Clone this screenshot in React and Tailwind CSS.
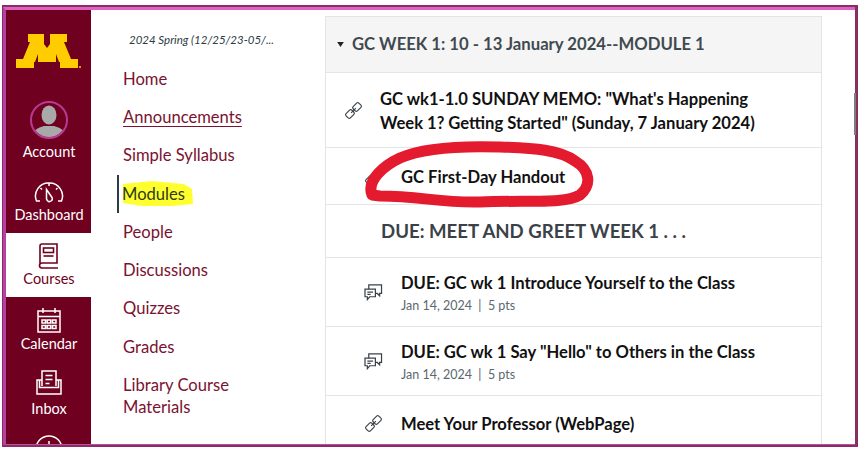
import React from "react";

const maroon = "#6f0020";

const LinkIcon = ({ className }) => (
  <svg viewBox="0 0 20 20" fill="none" stroke="#3a4248" strokeWidth="1.2" className={className}>
    <g transform="rotate(-45 10 10)">
      <rect x="0.5" y="6.8" width="8.5" height="6.4" rx="1.6" />
      <rect x="11" y="6.8" width="8.5" height="6.4" rx="1.6" />
      <path d="M6.5 10h7" />
    </g>
  </svg>
);

const DiscussionIcon = () => (
  <svg viewBox="0 0 20 18" fill="none" stroke="#3a4248" strokeWidth="1.3" className="w-[19px] h-[17px]">
    <path d="M1 5.5h11v8H6l-2.5 3v-3H1z" />
    <path d="M5 5.5V1h13.5v9h-2v2.5L14 10h-2" />
    <path d="M3.5 8.5h6M3.5 11h3.5" />
  </svg>
);

const DashboardIcon = ({ color }) => (
  <svg viewBox="0 0 30 22" fill="none" stroke={color} strokeWidth="1.5" className="w-[30px] h-[22px]">
    <path d="M6 20H2.5A13 13 0 0 1 15 2a13 13 0 0 1 12.5 18H24" />
    <path d="M12.5 8.5 18 16.5a2.8 2.8 0 0 1-4.5 3.2a2.8 2.8 0 0 1-1-2.5z" />
    <path d="M15 2v3M6.5 7l1.5 1.5M23.5 7 22 8.5" />
  </svg>
);

const CoursesIcon = ({ color }) => (
  <svg viewBox="0 0 22 26" fill="none" stroke={color} strokeWidth="1.6" className="w-[22px] h-[26px]">
    <path d="M2 21V3a2 2 0 0 1 2-2h15v19H4a2.5 2.5 0 0 0 0 5h16" />
    <rect x="5.5" y="5" width="10" height="4.5" />
    <path d="M5.5 13h10" />
  </svg>
);

const CalendarIcon = ({ color }) => (
  <svg viewBox="0 0 24 26" fill="none" stroke={color} strokeWidth="1.5" className="w-[24px] h-[26px]">
    <path d="M1 4h22v21H1zM1 9.5h22M6 1v5M18 1v5" />
    <path d="M5 13h3.5v3H5zM10.2 13h3.5v3h-3.5zM15.5 13H19v3h-3.5zM5 18.5h3.5v3H5zM10.2 18.5h3.5v3h-3.5zM15.5 18.5H19v3h-3.5z" />
  </svg>
);

const InboxIcon = ({ color }) => (
  <svg viewBox="0 0 26 26" fill="none" stroke={color} strokeWidth="1.5" className="w-[26px] h-[26px]">
    <path d="M6 16V1h14v15" />
    <path d="M9.5 5.5h7M9.5 9.5h7M9.5 13.5h4" />
    <path d="M6 10H1v14h24V10h-5" />
    <path d="M3.5 10v7.5h19V10" />
  </svg>
);

const AvatarIcon = () => (
  <div className="w-[38px] h-[38px] rounded-full border-2 border-[#b83a94] overflow-hidden bg-[#6f0020]">
    <svg viewBox="0 0 34 34" className="w-full h-full" fill="#a9a9a9">
      <ellipse cx="17" cy="12" rx="7.5" ry="9.5" />
      <path d="M0 34c0-7 6-9 12-11h10c6 2 12 4 12 11z" />
    </svg>
  </div>
);

const NavItem = ({ label, Icon, active, labelClass = "", padClass = "pt-[10px]" }) => {
  const color = active ? maroon : "#ffffff";
  return (
    <div className={`h-[64px] pl-px flex flex-col items-center shrink-0 ${padClass} ${active ? "bg-white text-[#6f0020]" : "text-white"}`}>
      <div className="h-[26px] flex items-center justify-center">
        <Icon color={color} />
      </div>
      <span className={`text-[14.5px] leading-[20px] ${labelClass}`}>{label}</span>
    </div>
  );
};

const Sidebar = () => (
  <div className="w-[85px] shrink-0 bg-[#6f0020] flex flex-col overflow-hidden">
    <div className="h-[87px] shrink-0 pt-[24px] pl-[10px]">
      <svg viewBox="16 34 66 35" className="w-[66px] h-[35px]">
        <path fill="#ffcc00" d="M28 34H67V42H64L71 59H78V68H60V62H34V68H16V59H23L30 42H28Z" />
        <path fill={maroon} d="M44 34H50V44L47 48L44 44ZM41 46 35 62H38V54ZM53 46 59 62H56V54Z" />
        <circle cx="80" cy="67" r="1" fill="#ffcc00" />
      </svg>
    </div>
    <div className="h-[72px] shrink-0 pt-[4px] pl-px flex flex-col items-center text-white">
      <AvatarIcon />
      <span className="text-[14.5px] leading-[20px] mt-[3px]">Account</span>
    </div>
    <NavItem label="Dashboard" Icon={DashboardIcon} />
    <NavItem label="Courses" Icon={CoursesIcon} active />
    <NavItem label="Calendar" Icon={CalendarIcon} labelClass="mt-px" />
    <NavItem label="Inbox" Icon={InboxIcon} padClass="pt-[9px]" labelClass="mt-[3px]" />
    <div className="pt-[10px] pl-px flex justify-center">
      <svg viewBox="0 0 28 28" fill="none" stroke="#ffffff" strokeWidth="1.5" className="w-[28px] h-[28px]">
        <circle cx="14" cy="14" r="13" />
        <path d="M14 6v9" />
      </svg>
    </div>
  </div>
);

const courseLinks = ["Home", "Announcements", "Simple Syllabus", "Modules", "People", "Discussions", "Quizzes", "Grades"];

const CourseNav = () => (
  <div className="w-[234px] shrink-0 pl-[32px]">
    <div className="h-[50px] pt-[22px] pl-[6px] text-[11.5px] leading-[16px] italic text-[#2d3b45]">
      2024 Spring (12/25/23-05/...
    </div>
    {courseLinks.map((name) => {
      if (name === "Modules") {
        return (
          <div key={name} className="relative h-[38.3px] -ml-[6px] pl-[3px] border-l-2 border-[#2d3b45] flex items-center text-[16.6px] text-[#2d3b18]">
            <svg viewBox="0 0 72 28" className="absolute left-[3px] top-[5px] w-[72px] h-[28px]">
              <path fill="#ffff30" d="M1 4 30 1 62 4 70 9 71 24 50 26 20 26 1 23Z" />
            </svg>
            <span className="relative">{name}</span>
          </div>
        );
      }
      return (
        <div key={name} className="h-[38.3px] flex items-center text-[16.6px] text-[#7a1230]">
          <span className={name === "Announcements" ? "underline underline-offset-[3px] decoration-1" : ""}>{name}</span>
        </div>
      );
    })}
    <div className="text-[16.6px] leading-[22px] text-[#7a1230] mt-[8px]">
      Library Course
      <br />
      Materials
    </div>
  </div>
);

const Row = ({ h, indent, icon, title, meta, children }) => (
  <div className={`${h} shrink-0 border-b border-[#e2e5e6] flex items-center`}>
    <div className={`flex items-center justify-center shrink-0 ${indent ? "w-[75px] pl-[20px]" : "w-[54px]"}`}>{icon}</div>
    <div className="min-w-0 pt-[2px]">
      <div className="text-[16.6px] leading-[24.5px] font-bold text-[#111111]">{title || children}</div>
      {meta && <div className="text-[12.5px] leading-[18px] whitespace-pre text-[#5b6870] mt-[1px]">{meta}</div>}
    </div>
  </div>
);

const Content = () => (
  <div className="w-[497px] shrink-0 mt-[6px] border-x border-[#e2e5e6] flex flex-col overflow-hidden">
    <div className="h-[57px] shrink-0 bg-[#f5f5f5] border-y border-[#e2e5e6] flex items-center pl-[11px]">
      <svg viewBox="0 0 8 6" className="w-[7px] h-[5px] mr-[8px]" fill="#222222">
        <path d="M0 0h8L4 6z" />
      </svg>
      <span className="text-[16.7px] font-bold text-[#3f4a50]">GC WEEK 1: 10 - 13 January 2024--MODULE 1</span>
    </div>
    <Row h="h-[75px]" icon={<LinkIcon className="w-[19px] h-[19px]" />}>
      GC wk1-1.0 SUNDAY MEMO: "What's Happening
      <br />
      Week 1? Getting Started" (Sunday, 7 January 2024)
    </Row>
    <Row h="h-[57px]" indent icon={<LinkIcon className="w-[19px] h-[19px]" />} title="GC First-Day Handout" />
    <div className="h-[53px] shrink-0 border-b border-[#e2e5e6] flex items-center pl-[55px] pt-[2px] text-[18.6px] font-bold text-[#3a4248]">
      DUE: MEET AND GREET WEEK 1 . . .
    </div>
    <Row h="h-[69px]" indent icon={<DiscussionIcon />} title="DUE: GC wk 1 Introduce Yourself to the Class" meta="Jan 14, 2024  |  5 pts" />
    <Row h="h-[69px]" indent icon={<DiscussionIcon />} title='DUE: GC wk 1 Say "Hello" to Others in the Class' meta="Jan 14, 2024  |  5 pts" />
    <Row h="h-[55px]" indent icon={<LinkIcon className="w-[19px] h-[19px]" />} title="Meet Your Professor (WebPage)" />
  </div>
);

export default function App() {
  return (
    <div className="relative w-[859px] h-[450px] bg-white pt-[5px] pl-[2px] overflow-hidden font-['Lato','Open_Sans',sans-serif]">
      <div className="w-[856px] h-[442px] border-t-2 border-l border-r-[3px] border-b-[2px] border-[#86305f]">
        <div className="h-full border-t-[3px] border-l-[3px] border-b-[1px] border-t-[#e25fc4] border-l-[#b83fa4] border-b-[#c24aa8] flex overflow-hidden">
          <Sidebar />
          <CourseNav />
          <Content />
        </div>
      </div>
      {/* hand-drawn circle around the handout */}
      <svg viewBox="360 138 240 75" className="absolute left-[360px] top-[138px] w-[240px] h-[75px]" fill="none">
        <path
          stroke="#e41b2e"
          strokeWidth="11"
          strokeLinejoin="round"
          d="M372 195C366 180 385 165 400 158C425 147 470 146 500 147C535 148 560 150 575 161C590 170 592 185 580 195C565 204 530 200 480 202C440 203 420 196 380 196Z"
        />
      </svg>
      {/* scrollbar thumb */}
      <div className="absolute left-[854px] top-[93px] w-[2px] h-[42px] bg-[#7d7d7d]" />
    </div>
  );
}
